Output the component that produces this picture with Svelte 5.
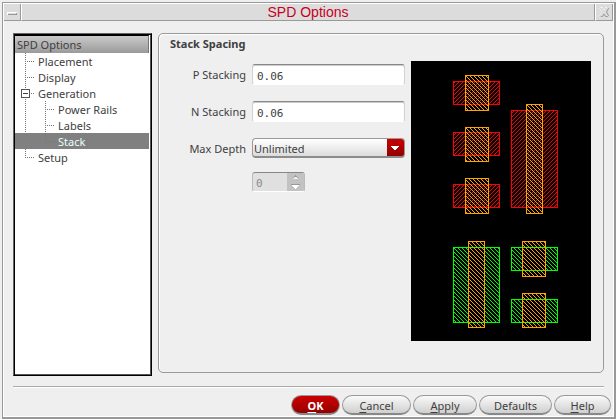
<script>
  let pSpacing = $state('0.06');
  let nSpacing = $state('0.06');
  let depth = $state('Unlimited');
  let count = $state(0);
  let selected = $state('Stack');

  const tree = [
    { name: 'Placement' },
    { name: 'Display' },
    { name: 'Generation', children: ['Power Rails', 'Labels', 'Stack'] },
    { name: 'Setup' }
  ];

  // layer, x, y, width, height of each shape, in drawing order
  const shapes = [
    ['red', 42, 20, 47, 24],
    ['red', 42, 71, 47, 24],
    ['red', 42, 123, 47, 24],
    ['red', 100, 49, 47, 98],
    ['green', 42, 186, 47, 76],
    ['green', 100, 186, 47, 24],
    ['green', 100, 238, 47, 24],
    ['orange', 54, 14, 24, 36],
    ['orange', 54, 66, 24, 35],
    ['orange', 54, 117, 24, 36],
    ['orange', 115, 43, 17, 110],
    ['orange', 57, 180, 17, 87],
    ['orange', 111, 180, 24, 36],
    ['orange', 111, 232, 24, 35]
  ];

  // Diagonal stipple on a shared 4px raster, so that layers line up with each other
  function hatch(layer, x, y, w, h) {
    let d = '';
    for (let row = y + 1; row < y + h - 1; row++) {
      for (let col = x + 1; col < x + w - 1; col++) {
        const phase = layer === 'red' ? col + row : col - row + 400;
        if (phase % 4 === 0) d += `M${col} ${row}h1v1h-1z`;
      }
    }
    return d;
  }
</script>

<main class="window">
  <header class="titlebar">
    <button class="winbtn" aria-label="Window menu">
      <svg width="16" height="16" viewBox="0 0 16 16" shape-rendering="crispEdges">
        <path d="M3 8h10v1h-9v2h-1z" fill="#fff" />
        <path d="M4 11h9v-2h-1v1h-8z" fill="#999" />
      </svg>
    </button>
    <h1>SPD Options</h1>
    <button class="winbtn close" aria-label="Close">
      <svg width="16" height="16" viewBox="0 0 16 16">
        <path d="M3.5 4.5l1-1h2L8 6l1.5-2.500h2l1 1L10.500 8l2 3.500-1 1h-2L8 10l-1.500 2.500h-2l-1-1L5.500 8z" fill="#dcdcdc" stroke="#999" />
        <path d="M4.500 12.500l-1-1L5.500 8l-2-3.500 1-1h2L8 6l1.500-2.500h2" fill="none" stroke="#fff" />
      </svg>
    </button>
  </header>

  <div class="body">
    <nav class="tree" aria-label="SPD Options">
      <div class="treehead">SPD Options</div>
      <ul>
        {#each tree as item}
          <li>
            {#if item.children}
              <button class="toggle" aria-label="Collapse {item.name}"></button>
            {/if}
            <button class="node" class:sel={selected === item.name} onclick={() => (selected = item.name)}>{item.name}</button>
            {#if item.children}
              <ul>
                {#each item.children as child}
                  <li>
                    <button class="node" class:sel={selected === child} onclick={() => (selected = child)}>{child}</button>
                  </li>
                {/each}
              </ul>
            {/if}
          </li>
        {/each}
      </ul>
    </nav>

    <section class="group">
      <h2>Stack Spacing</h2>
      <div class="content">
        <form class="fields">
          <label for="p">P Stacking</label>
          <input id="p" class="text" bind:value={pSpacing} />
          <label for="n">N Stacking</label>
          <input id="n" class="text" bind:value={nSpacing} />
          <label for="depth">Max Depth</label>
          <div class="depth">
            <div class="combo">
              <select id="depth" bind:value={depth}>
                <option>Unlimited</option>
                <option>Limited</option>
              </select>
              <svg width="17" height="18" viewBox="0 0 17 18" shape-rendering="crispEdges" aria-hidden="true">
                <path d="M4 7h8v1h-1v1h-1v1h-1v1h-2v-1h-1v-1h-1v-1h-1z" fill="#fff" />
              </svg>
            </div>
            <div class="spin">
              <input type="number" aria-label="Depth limit" bind:value={count} disabled />
              <svg width="17" height="18" viewBox="0 0 17 18" shape-rendering="crispEdges" aria-hidden="true">
                <path d="M8 3h1v1h1v1h1v1h-5v-1h1v-1h1z" fill="#eee" />
                <path d="M8 2h1v1h1v1h1v1h-1v-1h-3v1h-1v-1h1v-1h1z" fill="#999" />
                <path d="M4 11h9v1h-9z" fill="#999" />
                <path d="M5 12h7v1h-1v1h-1v1h-1v1h-1v-1h-1v-1h-1v-1h-1z" fill="#fff" />
              </svg>
            </div>
          </div>
        </form>

        <svg class="layout" width="180" height="280" viewBox="0 0 180 280" shape-rendering="crispEdges" role="img" aria-label="Stack layout preview">
          <rect width="180" height="280" fill="#000" />
          {#each shapes as [layer, x, y, w, h]}
            <g class={layer}>
              <path d={hatch(layer, x, y, w, h)} />
              <path fill-rule="evenodd" d="M{x} {y}h{w}v{h}h-{w}zM{x + 1} {y + 1}h{w - 2}v{h - 2}h-{w - 2}z" />
            </g>
          {/each}
        </svg>
      </div>
    </section>
  </div>

  <footer>
    <button class="push ok"><u>O</u>K</button>
    <button class="push cancel"><u>C</u>ancel</button>
    <button class="push apply"><u>A</u>pply</button>
    <button class="push defaults">Defaults</button>
    <button class="push help"><u>H</u>elp</button>
  </footer>
</main>

<style>
  :global(body) {
    margin: 0;
    background: #efefef;
  }
  * {
    box-sizing: border-box;
  }
  button, input, select {
    font: inherit;
    color: inherit;
    margin: 0;
    padding: 0;
    border: 0;
    background: none;
  }
  .window {
    display: flex;
    flex-direction: column;
    min-height: calc(100vh - 2px);
    margin: 2px 0 0 2px;
    padding: 1px;
    border: solid #999;
    border-width: 1px 2px 2px 1px;
    box-shadow: inset 1px 1px #fff, inset -1px -1px #fff;
    background: #efefef;
    color: #404040;
    font: 11px/16px "Noto Sans", sans-serif;
  }
  .titlebar {
    display: flex;
    height: 17px;
    background: #dcdcdc;
  }
  .titlebar h1 {
    flex: 1;
    margin: 0;
    border: solid #999;
    border-width: 0 1px 1px 0;
    border-left: 1px solid #fff;
    font: 14px/16px "Liberation Sans", Arial, sans-serif;
    text-align: center;
    color: #c8001e;
  }
  .winbtn {
    width: 17px;
    height: 17px;
    border: solid #999;
    border-width: 0 1px 1px 0;
  }
  .winbtn.close {
    width: 18px;
    border-left: 1px solid #fff;
  }
  .winbtn svg {
    display: block;
  }
  .body {
    flex: 1;
    display: flex;
    gap: 6px;
    margin: 12px 9px 0;
  }
  .tree {
    width: 139px;
    margin-bottom: -3px;
    border: 1px solid #000;
    border-top-color: #666;
    border-left-color: #666;
    box-shadow: inset 1px 1px #000, inset -1px -1px #555;
    background: #fff;
    padding: 2px 2px 1px 1px;
  }
  .treehead {
    height: 18px;
    margin-top: -1px;
    padding-left: 2px;
    border-top: 1px solid #000;
    border-right: 1px solid #777;
    background: linear-gradient(#cacaca, #9a9a9a);
    line-height: 18px;
  }
  ul {
    margin: 0;
    padding: 0;
    list-style: none;
  }
  li {
    position: relative;
  }
  li::before,
  li::after {
    content: "";
    position: absolute;
    left: 10px;
    pointer-events: none;
  }
  li::before {
    top: 0;
    bottom: 0;
    width: 1px;
    background: repeating-linear-gradient(#777 0 1px, transparent 1px 2px);
  }
  li:last-child::before {
    bottom: auto;
    height: 9px;
  }
  li::after {
    top: 8px;
    width: 10px;
    height: 1px;
    background: repeating-linear-gradient(90deg, #777 0 1px, transparent 1px 2px);
  }
  li li::before,
  li li::after {
    left: 30px;
  }
  .node {
    display: block;
    width: 100%;
    height: 16px;
    padding-left: 23px;
    text-align: left;
    line-height: 18px;
  }
  li li .node {
    padding-left: 43px;
  }
  .node.sel {
    background: #808080;
    color: #e8ffff;
  }
  .toggle {
    position: absolute;
    z-index: 1;
    left: 6px;
    top: 4px;
    width: 9px;
    height: 9px;
    border: 1px solid #555;
    background: linear-gradient(#444, #444) center / 5px 1px no-repeat #fff;
  }
  .group {
    flex: 1;
    padding: 2px 12px 0 11px;
    border: 1px solid #999;
    border-radius: 5px;
    box-shadow: inset 1px 1px #fff;
  }
  h2 {
    margin: 0;
    font: bold 11px/16px "Noto Sans", sans-serif;
  }
  .content {
    display: flex;
    gap: 6px;
    margin-top: 9px;
  }
  .fields {
    flex: 1;
    display: grid;
    grid-template-columns: 76px 1fr;
    gap: 16px 6px;
    align-content: start;
    padding-top: 3px;
  }
  label {
    text-align: right;
    line-height: 22px;
    height: 21px;
  }
  .text {
    width: 100%;
    height: 21px;
    padding: 3px 4px 0;
    border: solid #d0d0d0;
    border-width: 1px;
    border-top-color: #888;
    border-bottom-color: #fff;
    border-radius: 3px;
    box-shadow: inset 0 1px #ccc;
    background: #fff;
    font-family: "DejaVu Sans Mono", monospace;
  }
  .depth {
    display: flex;
    flex-direction: column;
    gap: 14px;
  }
  .combo {
    display: flex;
    height: 20px;
    border: 1px solid #999;
    border-bottom: 2px solid #8c8c8c;
    border-radius: 4px;
    background: linear-gradient(#fff, #dcdcdc);
    overflow: hidden;
  }
  .combo select {
    flex: 1;
    appearance: none;
    padding: 2px 1px 0;
    line-height: 16px;
  }
  .combo svg {
    background: linear-gradient(#c80000, #900000);
  }
  .spin {
    display: flex;
    width: 53px;
    height: 20px;
    border: 1px solid #bbb;
    border-top-color: #888;
    border-bottom-color: #fff;
    border-radius: 3px;
    background: #e0e0e0;
    overflow: hidden;
  }
  .spin input {
    flex: 1;
    min-width: 0;
    padding: 4px 3px 0;
    appearance: textfield;
    font-family: "DejaVu Sans Mono", monospace;
    color: #888;
  }
  .spin svg {
    background: #c2c2c2;
  }
  .layout {
    display: block;
    flex: none;
  }
  .red {
    fill: #f00;
  }
  .green {
    fill: #0f0;
  }
  .orange {
    fill: #ffa500;
  }
  footer {
    display: flex;
    justify-content: flex-end;
    gap: 2px;
    margin: 13px 0 0 9px;
    padding: 9px 2px 1px 0;
    background: linear-gradient(#aaa 0 1px, #fff 1px 2px, transparent 2px) 0 0 / calc(100% - 9px) 100% no-repeat;
  }
  .push {
    height: 20px;
    padding: 1px 0 0;
    border: 1px solid #999;
    border-bottom: 2px solid #888;
    border-radius: 10px;
    background: linear-gradient(#fafafa, #cfcfcf);
    line-height: 18px;
  }
  .push u {
    text-underline-offset: 2px;
  }
  .ok {
    width: 49px;
    background: linear-gradient(#cc0000, #960000);
    color: #fff;
    font-weight: bold;
  }
  .cancel {
    width: 69px;
  }
  .apply {
    width: 64px;
  }
  .defaults {
    width: 73px;
  }
  .help {
    width: 57px;
  }
</style>
